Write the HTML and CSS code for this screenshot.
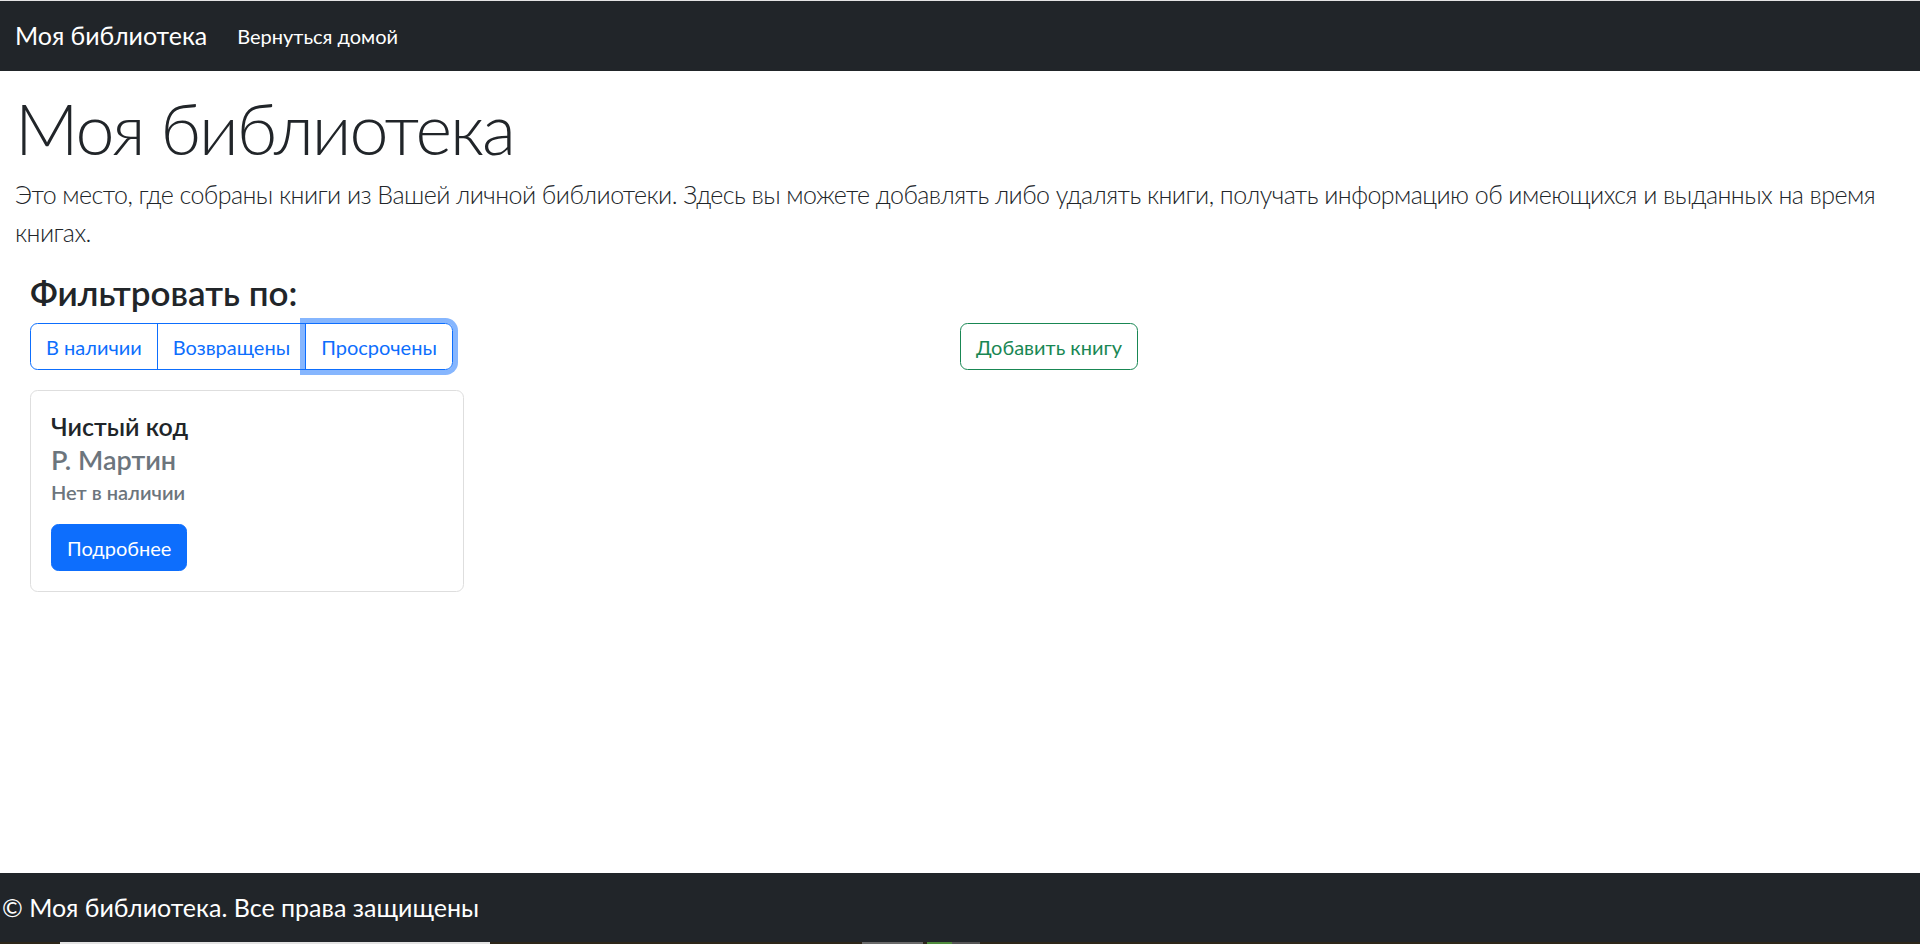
FILE: index.html
```html
<!DOCTYPE html>
<html lang="ru">
<head>
<meta charset="utf-8">
<title>Моя библиотека</title>
<link rel="stylesheet" href="styles.css">
</head>
<body>
<nav class="navbar">
  <a class="navbar-brand" href="#">Моя библиотека</a>
  <a class="nav-link" href="#">Вернуться домой</a>
</nav>

<main class="page">
  <h1 class="display">Моя библиотека</h1>
  <p class="lead">Это место, где собраны книги из Вашей личной библиотеки. Здесь вы можете добавлять либо удалять книги, получать информацию об имеющихся и выданных на время книгах.</p>

  <section class="library">
    <div class="toolbar">
      <div class="filters">
        <h3 class="filters-title">Фильтровать по:</h3>
        <div class="btn-group">
          <button class="btn btn-outline-primary">В наличии</button>
          <button class="btn btn-outline-primary">Возвращены</button>
          <button class="btn btn-outline-primary is-focused">Просрочены</button>
        </div>
      </div>
      <div class="actions">
        <button class="btn btn-outline-success">Добавить книгу</button>
      </div>
    </div>

    <div class="cards">
      <div class="card">
        <h5 class="card-title">Чистый код</h5>
        <h6 class="card-subtitle">Р. Мартин</h6>
        <h6 class="card-status">Нет в наличии</h6>
        <button class="btn btn-primary">Подробнее</button>
      </div>
    </div>
  </section>
</main>

<footer class="footer">© Моя библиотека. Все права защищены</footer>
<div class="os-strip">
  <span class="seg seg-a"></span>
  <span class="seg seg-light"></span>
  <span class="seg seg-b"></span>
  <span class="seg seg-gray"></span>
  <span class="seg seg-c"></span>
  <span class="seg seg-green"></span>
  <span class="seg seg-dgray"></span>
</div>
</body>
</html>
```
FILE: styles.css
```css
* { box-sizing: border-box; }

html, body { margin: 0; padding: 0; }

body {
  font-family: Lato, "Liberation Sans", sans-serif;
  font-size: 20px;
  line-height: 1.5;
  color: #212529;
  background: #fff;
  min-height: 944px;
  display: flex;
  flex-direction: column;
  border-top: 1px solid #e4e4e4;
}

a { text-decoration: none; }

/* Navbar */
.navbar {
  background: #212529;
  height: 70px;
  display: flex;
  align-items: center;
  padding: 10px 15px;
}
.navbar-brand {
  color: #fff;
  font-size: 25px;
  line-height: 37.5px;
  margin-right: 20px;
}
.nav-link {
  color: #fff;
  font-size: 20px;
  line-height: 30px;
  padding: 10px 10px;
}

/* Page */
.page {
  flex: 1;
  padding: 0 15px;
}
.display {
  font-size: 70px;
  font-weight: 300;
  line-height: 84px;
  letter-spacing: -2px;
  margin: 15px 0 6px;
}
.lead {
  font-size: 25px;
  font-weight: 300;
  line-height: 37.5px;
  letter-spacing: -0.55px;
  margin: 0 0 20px;
}

.library {
  padding: 0 15px;
}
.toolbar {
  display: grid;
  grid-template-columns: 930px auto;
  align-items: end;
}
.filters-title {
  font-size: 35px;
  font-weight: 600;
  line-height: 42px;
  margin: 0 0 10px;
}

/* Buttons */
.btn {
  font-family: inherit;
  font-size: 20px;
  line-height: 30px;
  padding: 7.5px 15px;
  border: 1px solid transparent;
  border-radius: 7.5px;
  background: transparent;
  cursor: pointer;
}
.btn-group {
  display: inline-flex;
}
.btn-group .btn {
  position: relative;
  border-radius: 0;
}
.btn-group .btn + .btn { margin-left: -1px; }
.btn-group .btn:first-child { border-radius: 7.5px 0 0 7.5px; }
.btn-group .btn:last-child { border-radius: 0 7.5px 7.5px 0; }

.btn-outline-primary {
  color: #0d6efd;
  border-color: #0d6efd;
}
.btn-outline-primary.is-focused {
  z-index: 1;
  box-shadow: 0 0 0 5px rgba(13, 110, 253, 0.5);
}
.btn-outline-success {
  color: #198754;
  border-color: #198754;
}
.btn-primary {
  color: #fff;
  background: #0d6efd;
  border-color: #0d6efd;
}

/* Cards */
.cards {
  display: flex;
  margin-top: 20px;
}
.card {
  width: 434px;
  border: 1px solid #dedede;
  border-radius: 7.5px;
  padding: 20px;
}
.card-title {
  font-size: 25px;
  font-weight: 600;
  line-height: 30px;
  margin: 0 0 3px;
}
.card-subtitle {
  font-size: 27px;
  font-weight: 600;
  line-height: 32px;
  color: #6c757d;
  margin: 0 0 4px;
}
.card-status {
  font-size: 20px;
  font-weight: 600;
  line-height: 24px;
  color: #6c757d;
  margin: 0 0 20px;
}

/* Footer */
.footer {
  background: #212529;
  color: #fff;
  font-size: 25px;
  line-height: 37.5px;
  padding: 16px 0 15.5px 2px;
}

/* bottom system strip */
.os-strip {
  display: flex;
  height: 2px;
  background: #2d2619;
}
.seg { display: block; height: 2px; }
.seg-a { width: 60px; }
.seg-light { width: 430px; background: #e2e2e2; }
.seg-b { width: 372px; }
.seg-gray { width: 61px; background: #6a6a6a; }
.seg-c { width: 4px; }
.seg-green { width: 25px; background: #4f8b3b; }
.seg-dgray { width: 28px; background: #555; }
```
